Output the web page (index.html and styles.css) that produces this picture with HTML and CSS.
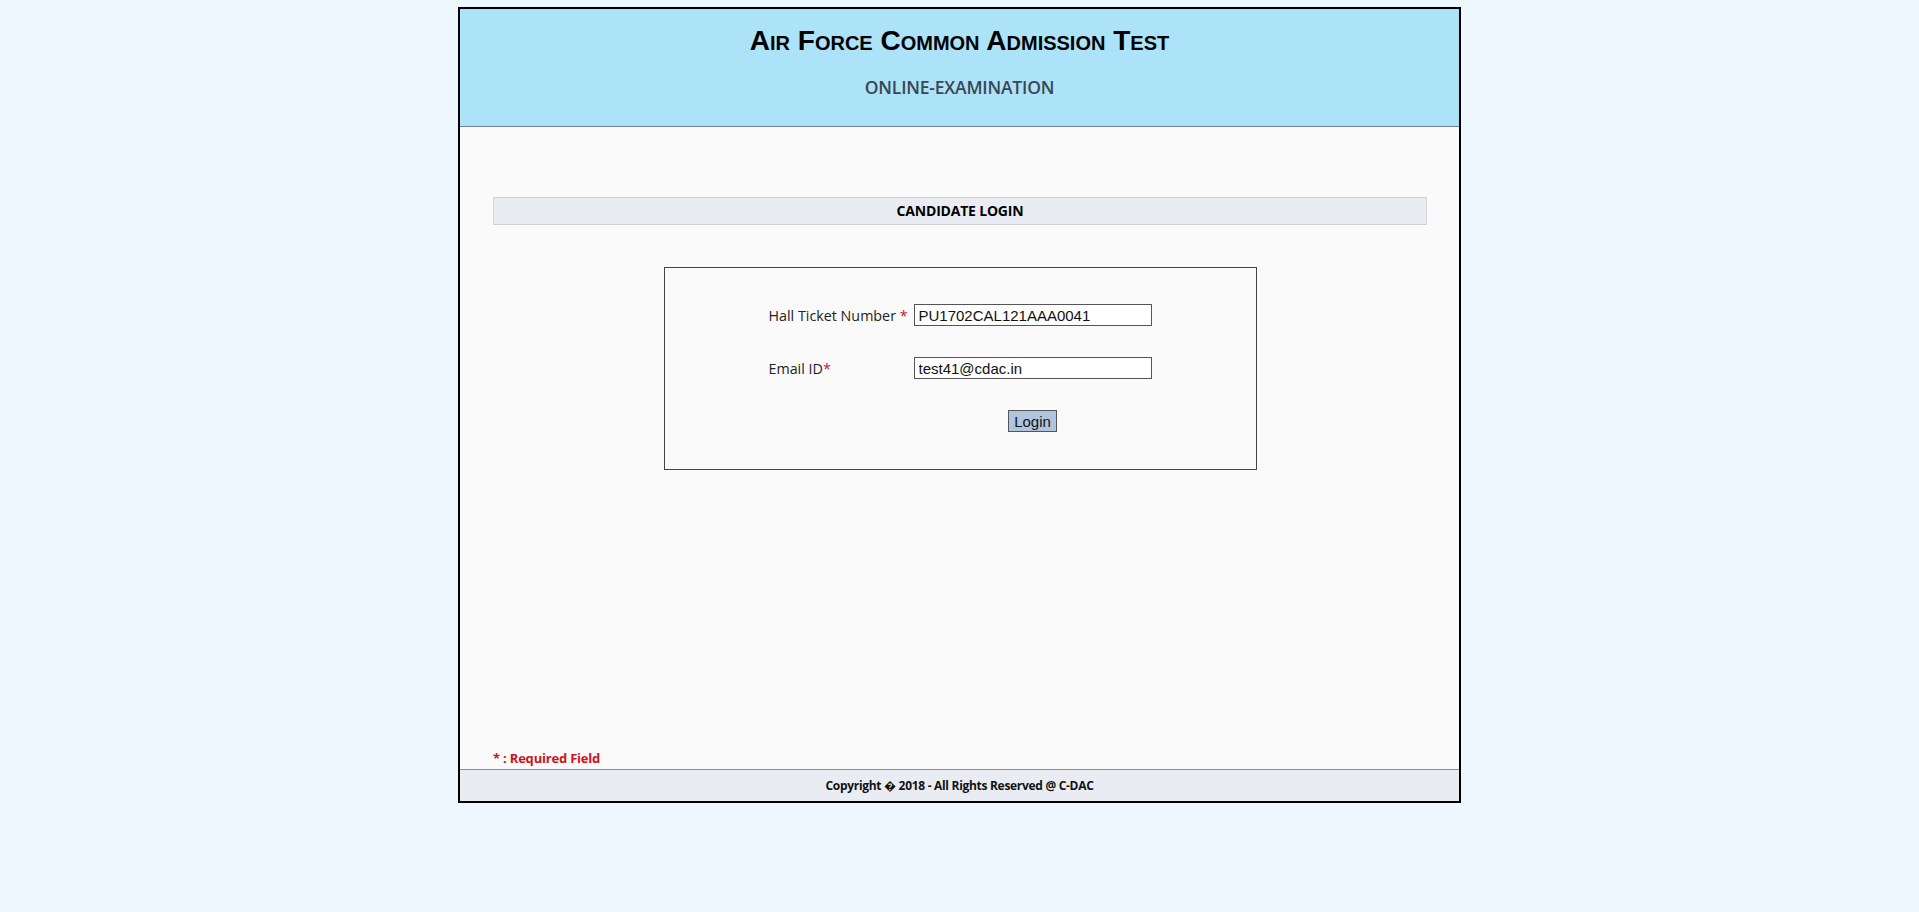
FILE: index.html
```html
<!DOCTYPE html>
<html lang="en">
<head>
    <meta charset="UTF-8">
    <title>Air Force Common Admission Test - Online Examination</title>
    <link rel="stylesheet" href="styles.css">
</head>
<body>
    <div class="page">
        <div class="header">
            <h1>Air Force Common Admission Test</h1>
            <h2>ONLINE-EXAMINATION</h2>
        </div>

        <div class="content">
            <div class="section-title">CANDIDATE LOGIN</div>

            <div class="login-box">
                <form class="login-form" onsubmit="return false;">
                    <label for="hallTicket">Hall Ticket Number <span class="req">*</span></label>
                    <input type="text" id="hallTicket" value="PU1702CAL121AAA0041">

                    <label for="email">Email ID<span class="req">*</span></label>
                    <input type="text" id="email" value="test41@cdac.in">

                    <span></span>
                    <div class="btn-cell">
                        <button type="submit">Login</button>
                    </div>
                </form>
            </div>

            <div class="required-note">* : Required Field</div>
        </div>

        <div class="footer">Copyright &#xFFFD; 2018 - All Rights Reserved @ C-DAC</div>
    </div>
</body>
</html>
```

FILE: styles.css
```css
body {
    margin: 0;
    background-color: #eff7fe;
    font-family: 'Open Sans', sans-serif;
}

.page {
    width: 999px;
    margin: 7px auto 0;
    border: 2px solid #000;
    background-color: #fafafa;
}

.header {
    background-color: #ace3f8;
    border-bottom: 1px solid #6d8394;
    height: 117px;
    text-align: center;
    overflow: hidden;
}

.header h1 {
    margin: 15px 0 0;
    font-family: 'Liberation Sans', Arial, sans-serif;
    font-variant: small-caps;
    font-size: 28px;
    font-weight: bold;
    color: #000;
    line-height: 34px;
}

.header h2 {
    margin: 18px 0 0;
    font-size: 17.5px;
    font-weight: 600;
    color: #3a4651;
    line-height: 22px;
    letter-spacing: -0.2px;
}

.content {
    height: 642px;
    padding: 70px 32px 0 33px;
    box-sizing: border-box;
    display: flex;
    flex-direction: column;
}

.section-title {
    background-color: #e9edf3;
    border: 1px solid #cfd3d8;
    height: 26px;
    line-height: 26px;
    text-align: center;
    font-size: 14px;
    font-weight: bold;
    color: #000;
    letter-spacing: -0.2px;
}

.login-box {
    width: 591px;
    margin: 42px auto 0;
    border: 1px solid #444;
    padding: 36px 0 37px;
}

.login-form {
    display: grid;
    grid-template-columns: 145px 238px;
    grid-auto-rows: 22px;
    row-gap: 31px;
    justify-content: center;
    align-items: center;
}

.login-form label {
    font-size: 14.3px;
    color: #222;
}

.req {
    color: #c8102e;
}

.login-form input {
    width: 238px;
    height: 22px;
    box-sizing: border-box;
    border: 1px solid #555;
    padding: 1px 4px;
    font-family: 'Liberation Sans', Arial, sans-serif;
    font-size: 15px;
    color: #111;
    background: #fff;
}

.btn-cell {
    text-align: center;
}

button {
    height: 22px;
    padding: 0 5px;
    background-color: #b0c4de;
    border: 1px solid #555;
    font-family: 'Liberation Sans', Arial, sans-serif;
    font-size: 15px;
    color: #111;
}

.required-note {
    margin-top: auto;
    margin-bottom: 2px;
    font-size: 13px;
    font-weight: bold;
    color: #d0121b;
    letter-spacing: -0.2px;
}

.footer {
    background-color: #e9edf3;
    border-top: 1px solid #8a8f96;
    height: 31px;
    line-height: 31px;
    text-align: center;
    font-size: 12px;
    font-weight: bold;
    color: #111;
    letter-spacing: -0.3px;
}
```
